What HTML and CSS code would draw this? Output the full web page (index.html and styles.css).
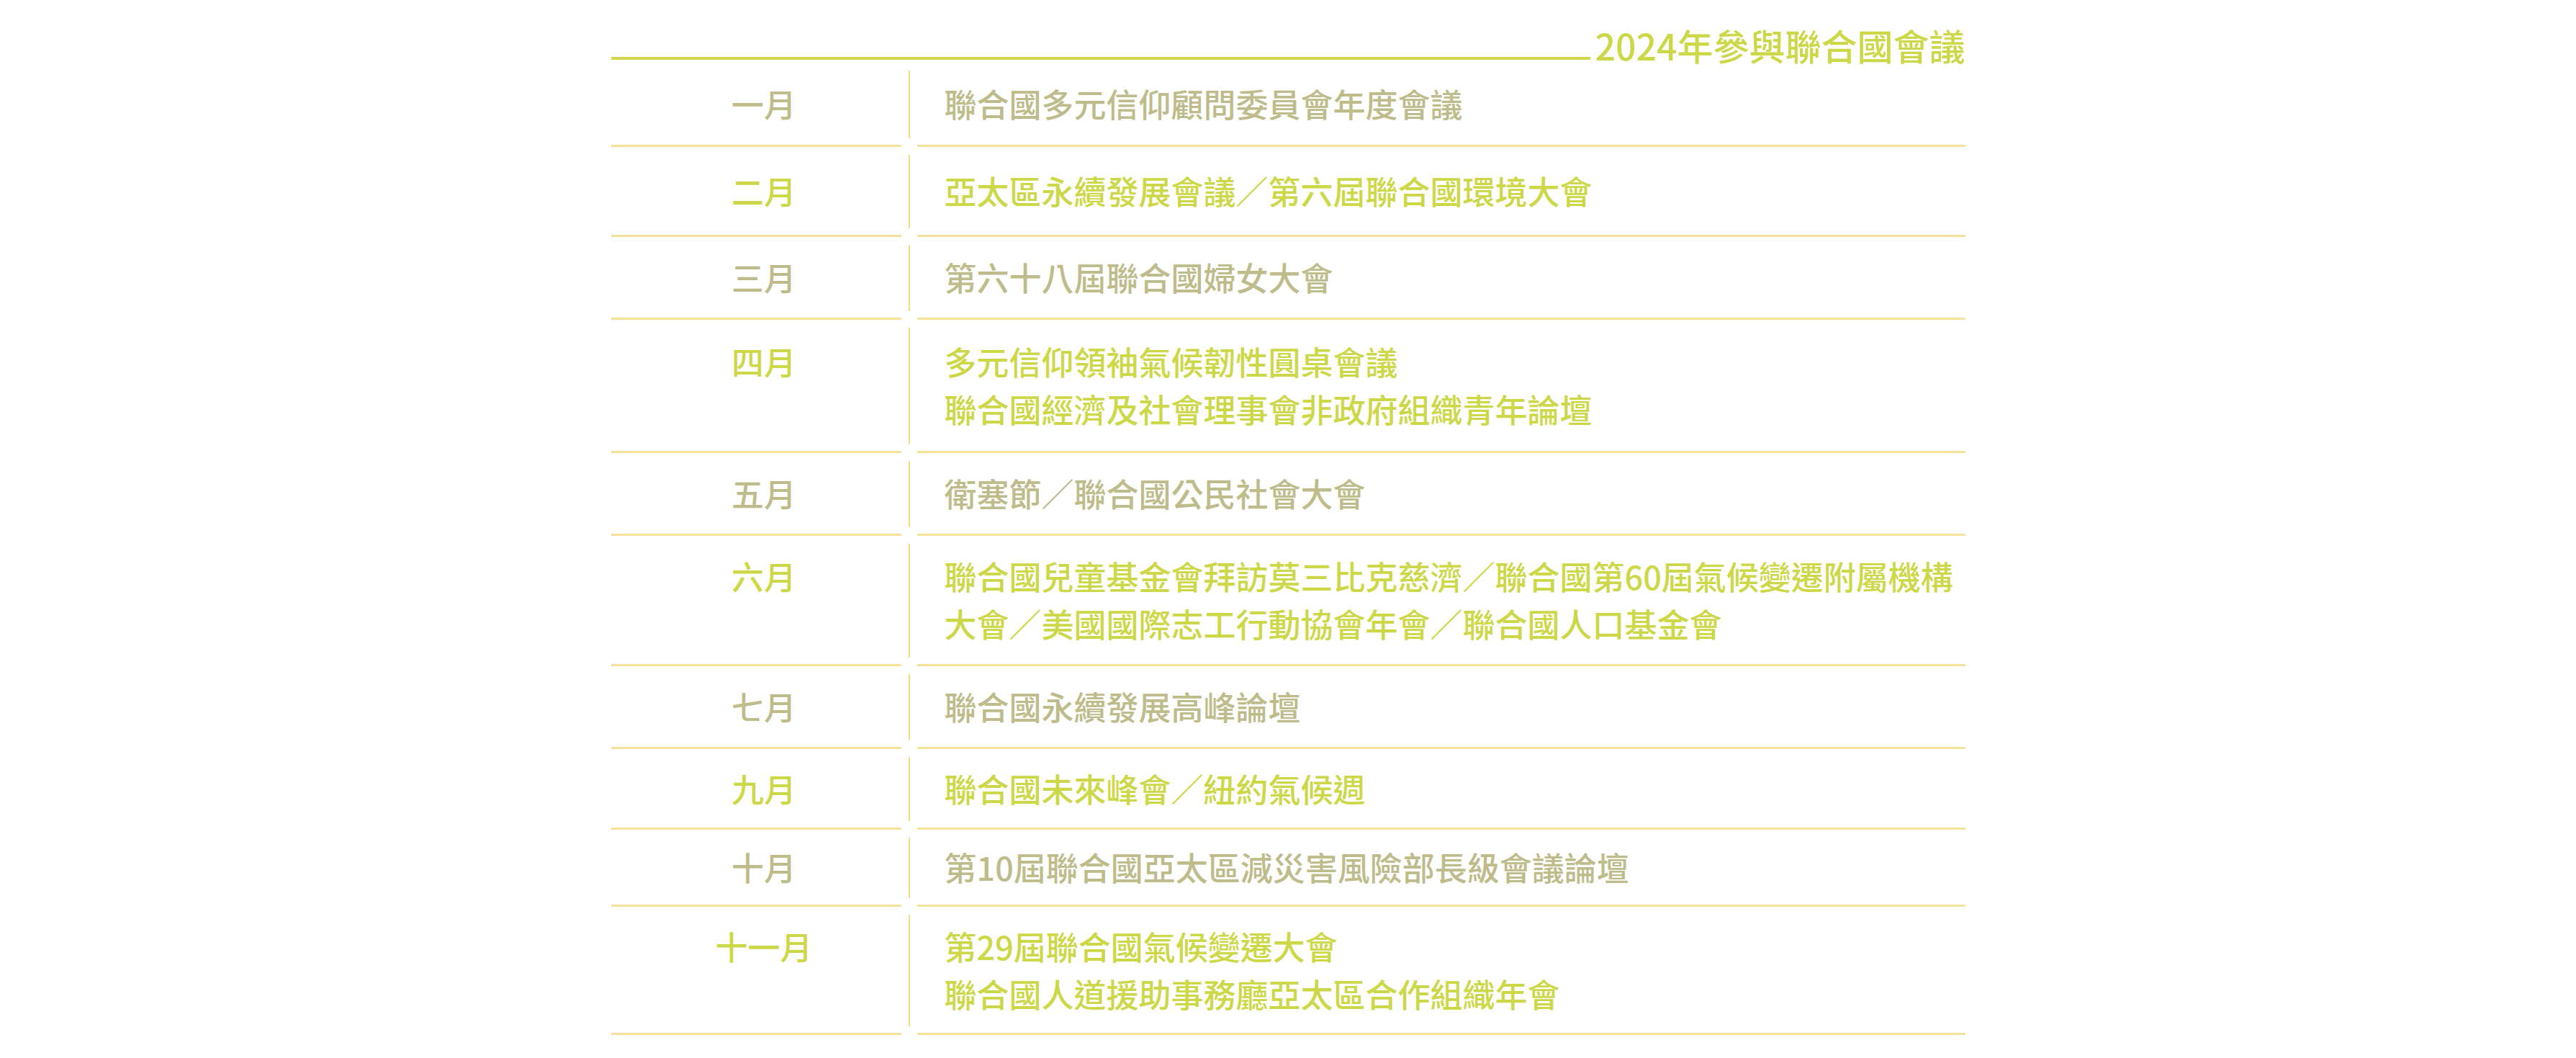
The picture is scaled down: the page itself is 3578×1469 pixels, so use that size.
FILE: index.html
```html
<!DOCTYPE html>
<html lang="zh-Hant">
<head>
<meta charset="utf-8">
<title>2024年參與聯合國會議</title>
<link rel="stylesheet" href="styles.css">
</head>
<body>
<main class="schedule">
  <header class="schedule__head">
    <span class="schedule__rule"></span>
    <h1 class="schedule__title">2024年參與聯合國會議</h1>
  </header>
  <ul class="schedule__list">
    <li class="entry entry--lead">
      <div class="entry__month">一月</div>
      <span class="entry__divider"></span>
      <div class="entry__events"><p>聯合國多元信仰顧問委員會年度會議</p></div>
    </li>
    <li class="entry entry--airy">
      <div class="entry__month">二月</div>
      <span class="entry__divider"></span>
      <div class="entry__events"><p>亞太區永續發展會議／第六屆聯合國環境大會</p></div>
    </li>
    <li class="entry">
      <div class="entry__month">三月</div>
      <span class="entry__divider"></span>
      <div class="entry__events"><p>第六十八屆聯合國婦女大會</p></div>
    </li>
    <li class="entry entry--wide">
      <div class="entry__month">四月</div>
      <span class="entry__divider"></span>
      <div class="entry__events"><p>多元信仰領袖氣候韌性圓桌會議</p><p>聯合國經濟及社會理事會非政府組織青年論壇</p></div>
    </li>
    <li class="entry">
      <div class="entry__month">五月</div>
      <span class="entry__divider"></span>
      <div class="entry__events"><p>衛塞節／聯合國公民社會大會</p></div>
    </li>
    <li class="entry">
      <div class="entry__month">六月</div>
      <span class="entry__divider"></span>
      <div class="entry__events"><p>聯合國兒童基金會拜訪莫三比克慈濟／聯合國第60屆氣候變遷附屬機構大會／美國國際志工行動協會年會／聯合國人口基金會</p></div>
    </li>
    <li class="entry">
      <div class="entry__month">七月</div>
      <span class="entry__divider"></span>
      <div class="entry__events"><p>聯合國永續發展高峰論壇</p></div>
    </li>
    <li class="entry entry--close">
      <div class="entry__month">九月</div>
      <span class="entry__divider"></span>
      <div class="entry__events"><p>聯合國未來峰會／紐約氣候週</p></div>
    </li>
    <li class="entry entry--snug">
      <div class="entry__month">十月</div>
      <span class="entry__divider"></span>
      <div class="entry__events"><p>第10屆聯合國亞太區減災害風險部長級會議論壇</p></div>
    </li>
    <li class="entry entry--close">
      <div class="entry__month">十一月</div>
      <span class="entry__divider"></span>
      <div class="entry__events"><p>第29屆聯合國氣候變遷大會</p><p>聯合國人道援助事務廳亞太區合作組織年會</p></div>
    </li>
  </ul>
</main>
</body>
</html>
```

FILE: styles.css
```css
html, body {
  margin: 0;
  padding: 0;
  background: #ffffff;
}

body {
  font-family: "Noto Sans CJK TC", "Noto Sans", sans-serif;
  font-weight: 500;
}

.schedule {
  width: 1881px;
  margin: 0 auto;
  padding-top: 37px;
}

.schedule__head {
  display: flex;
  align-items: flex-end;
  gap: 7px;
}

.schedule__rule {
  flex: 1;
  height: 4px;
  margin-bottom: 4px;
  background: #cfd84b;
}

.schedule__title {
  margin: 0;
  font-size: 50px;
  line-height: 50px;
  font-weight: 500;
  color: #cdd849;
  white-space: nowrap;
}

.schedule__list {
  list-style: none;
  margin: 0;
  padding: 0;
}

.entry {
  --pad: 23px;
  display: grid;
  grid-template-columns: 403px 22px 1fr;
  font-size: 45px;
  line-height: 66px;
  color: #bebc8b;
}

.entry:nth-child(even) {
  color: #cdd849;
}

.entry--lead { --pad: 24px; }
.entry--airy { --pad: 28px; }
.entry--wide { --pad: 25px; }
.entry--close { --pad: 21.5px; }
.entry--snug { --pad: 19px; }

.entry__month {
  padding: var(--pad) 0 var(--pad) 22px;
  text-align: center;
  border-bottom: 3px solid #f4e29c;
}

.entry__divider {
  background: linear-gradient(#f3dc84, #f3dc84) no-repeat;
  background-size: 2px calc(100% - 23px);
  background-position: center 11px;
}

.entry__events {
  padding: var(--pad) 0 var(--pad) 38px;
  border-bottom: 3px solid #f4e29c;
}

.entry__events p {
  margin: 0;
}
```
